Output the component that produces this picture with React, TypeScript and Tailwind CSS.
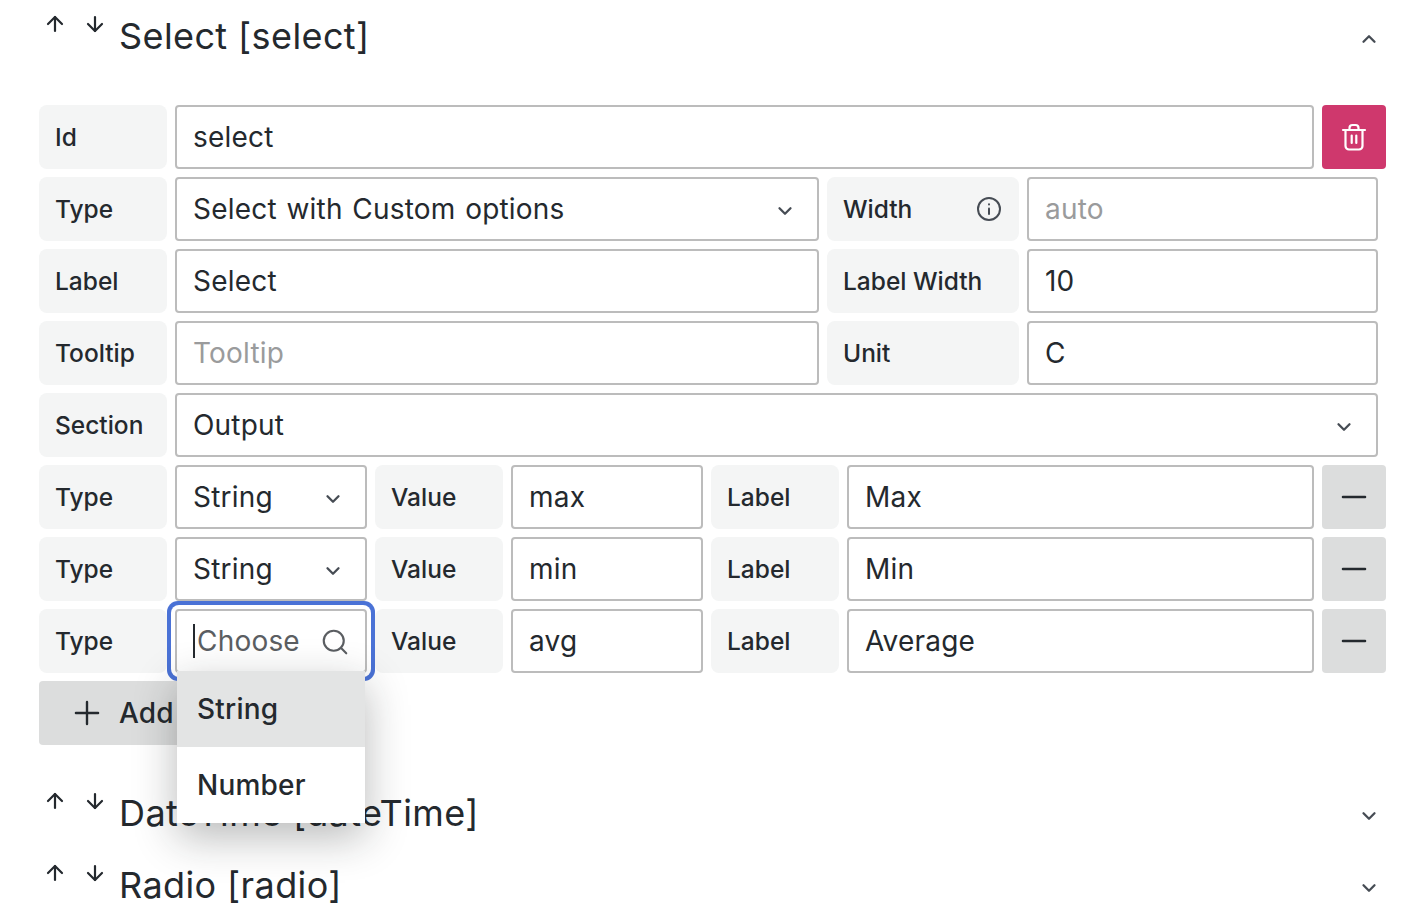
import React from 'react';
import { ArrowUp, ArrowDown, ChevronUp, ChevronDown, Plus, Minus, Search } from 'lucide-react';

const FieldLabel: React.FC<{ width?: string; children: React.ReactNode }> = ({ width = 'w-[128px]', children }) => (
    <div className={`${width} h-16 shrink-0 rounded-[8px] bg-[#f4f5f5] px-4 flex items-center justify-between text-[24.5px] font-medium text-[#24292e]`}>
        {children}
    </div>
);

const Field: React.FC<{ className: string; value?: string; placeholder?: string; chevron?: boolean }> = ({ className, value, placeholder, chevron }) => (
    <div className={`${className} h-16 rounded-[4px] border-2 border-[#bcbcbc] bg-white pl-4 pr-[21px] flex items-center justify-between text-[28px] tracking-[0.2px] [word-spacing:1.6px] ${placeholder ? 'text-[#9a9b9c]' : 'text-[#24292e]'}`}>
        <span>{value ?? placeholder}</span>
        {chevron && <ChevronDown className="w-[22px] h-[22px] text-[#464c54] mt-[3px]" strokeWidth={2.5} />}
    </div>
);

const SectionHeader: React.FC<{ title: string; open?: boolean }> = ({ title, open }) => (
    <div className="h-[72px] flex items-center pr-[6px] text-[#24292e]">
        <div className="flex self-start pt-[12px] gap-[16px] pl-[4px] w-[80px] shrink-0">
            <ArrowUp className="w-6 h-6" strokeWidth={2.2} />
            <ArrowDown className="w-6 h-6" strokeWidth={2.2} />
        </div>
        <span className="flex-1 text-[36px] tracking-[0.4px]">{title}</span>
        {open ? (
            <ChevronUp className="w-[22px] h-[22px] text-[#464c54] mt-[6px]" strokeWidth={2.5} />
        ) : (
            <ChevronDown className="w-[22px] h-[22px] text-[#464c54] mt-[6px]" strokeWidth={2.5} />
        )}
    </div>
);

const RemoveButton = () => (
    <button className="w-16 h-16 shrink-0 rounded-[4px] bg-[#dcdddd] flex items-center justify-center text-[#24292e]">
        <Minus className="w-[38px] h-[38px]" strokeWidth={1.5} />
    </button>
);

const OptionRow: React.FC<{ value: string; label: string; focused?: boolean }> = ({ value, label, focused }) => (
    <div className="flex gap-2">
        <FieldLabel>Type</FieldLabel>
        {focused ? (
            <div className="relative z-10 w-[192px] h-16 shrink-0 rounded-[4px] border-2 border-[#bcbcbc] bg-white pl-[16px] pr-[15px] flex items-center justify-between text-[28px] tracking-[0.2px] text-[#5b5e62] shadow-[0_0_0_4px_#fff,0_0_0_8px_#4a72d6]">
                <span className="flex items-center">
                    <span className="w-[2px] h-[34px] bg-[#24292e] mr-[2px]" />
                    Choose
                </span>
                <Search className="w-[30px] h-[30px] mt-[2px]" strokeWidth={1.7} />
                {/* dropdown */}
                <div className="absolute left-0 top-[60px] w-[188px] bg-white shadow-[0_14px_40px_rgba(24,26,27,0.3)] text-[28px] font-medium tracking-[0.2px] text-[#24292e]">
                    <div className="h-[76px] bg-[#e3e4e4] pl-5 flex items-center">String</div>
                    <div className="h-[76px] pl-5 flex items-center">Number</div>
                </div>
            </div>
        ) : (
            <Field className="w-[192px] shrink-0" value="String" chevron />
        )}
        <FieldLabel>Value</FieldLabel>
        <Field className="w-[192px] shrink-0" value={value} />
        <FieldLabel>Label</FieldLabel>
        <Field className="flex-1" value={label} />
        <RemoveButton />
    </div>
);

export default function App() {
    return (
        <div className="h-[920px] overflow-hidden bg-white pl-[39px] pr-[26px] font-['Inter',sans-serif]">
            <SectionHeader title="Select [select]" open />
            <div className="mt-[33px] flex flex-col gap-2">
                <div className="flex gap-2">
                    <FieldLabel>Id</FieldLabel>
                    <Field className="flex-1" value="select" />
                    <button className="w-16 h-16 shrink-0 rounded-[4px] bg-[#cf386d] flex items-center justify-center">
                        <svg className="w-7 h-7" viewBox="0 0 28 28" fill="none" stroke="#fff" strokeWidth="2.2" strokeLinecap="round" strokeLinejoin="round">
                            <path d="M3 7h22" />
                            <path d="M9.5 7V5a3 3 0 0 1 3-3h3a3 3 0 0 1 3 3v2" />
                            <path d="M5.5 7v16a3.5 3.5 0 0 0 3.5 3.5h10a3.5 3.5 0 0 0 3.5-3.5V7" />
                            <path d="M11.7 12.5v7.5M16.3 12.5v7.5" />
                        </svg>
                    </button>
                </div>
                <div className="flex gap-2 pr-2">
                    <FieldLabel>Type</FieldLabel>
                    <Field className="flex-1" value="Select with Custom options" chevron />
                    <FieldLabel width="w-[192px]">
                        Width
                        <svg className="w-[26px] h-[26px] mr-[1px] text-[#464c54]" viewBox="0 0 26 26" fill="none" stroke="currentColor" strokeWidth="2" strokeLinecap="round">
                            <circle cx="13" cy="13" r="11" />
                            <path d="M13 12.5v5.5" />
                            <path d="M13 8.2v.2" />
                        </svg>
                    </FieldLabel>
                    <Field className="w-[351px] shrink-0" placeholder="auto" />
                </div>
                <div className="flex gap-2 pr-2">
                    <FieldLabel>Label</FieldLabel>
                    <Field className="flex-1" value="Select" />
                    <FieldLabel width="w-[192px]">Label Width</FieldLabel>
                    <Field className="w-[351px] shrink-0" value="10" />
                </div>
                <div className="flex gap-2 pr-2">
                    <FieldLabel>Tooltip</FieldLabel>
                    <Field className="flex-1" placeholder="Tooltip" />
                    <FieldLabel width="w-[192px]">Unit</FieldLabel>
                    <Field className="w-[351px] shrink-0" value="C" />
                </div>
                <div className="flex gap-2 pr-2">
                    <FieldLabel>Section</FieldLabel>
                    <Field className="flex-1" value="Output" chevron />
                </div>
                <OptionRow value="max" label="Max" />
                <OptionRow value="min" label="Min" />
                <OptionRow value="avg" label="Average" focused />
                <div>
                    <button className="h-16 w-[300px] rounded-[4px] bg-[#dcdddd] pl-[29px] flex items-center gap-[13px] whitespace-nowrap text-[28px] font-medium tracking-[0.2px] text-[#24292e]">
                        <Plus className="w-[38px] h-[38px] shrink-0" strokeWidth={1.5} />
                        Add Option
                    </button>
                </div>
            </div>
            <div className="mt-[32px]">
                <SectionHeader title="DateTime [dateTime]" />
                <SectionHeader title="Radio [radio]" />
            </div>
        </div>
    );
}
